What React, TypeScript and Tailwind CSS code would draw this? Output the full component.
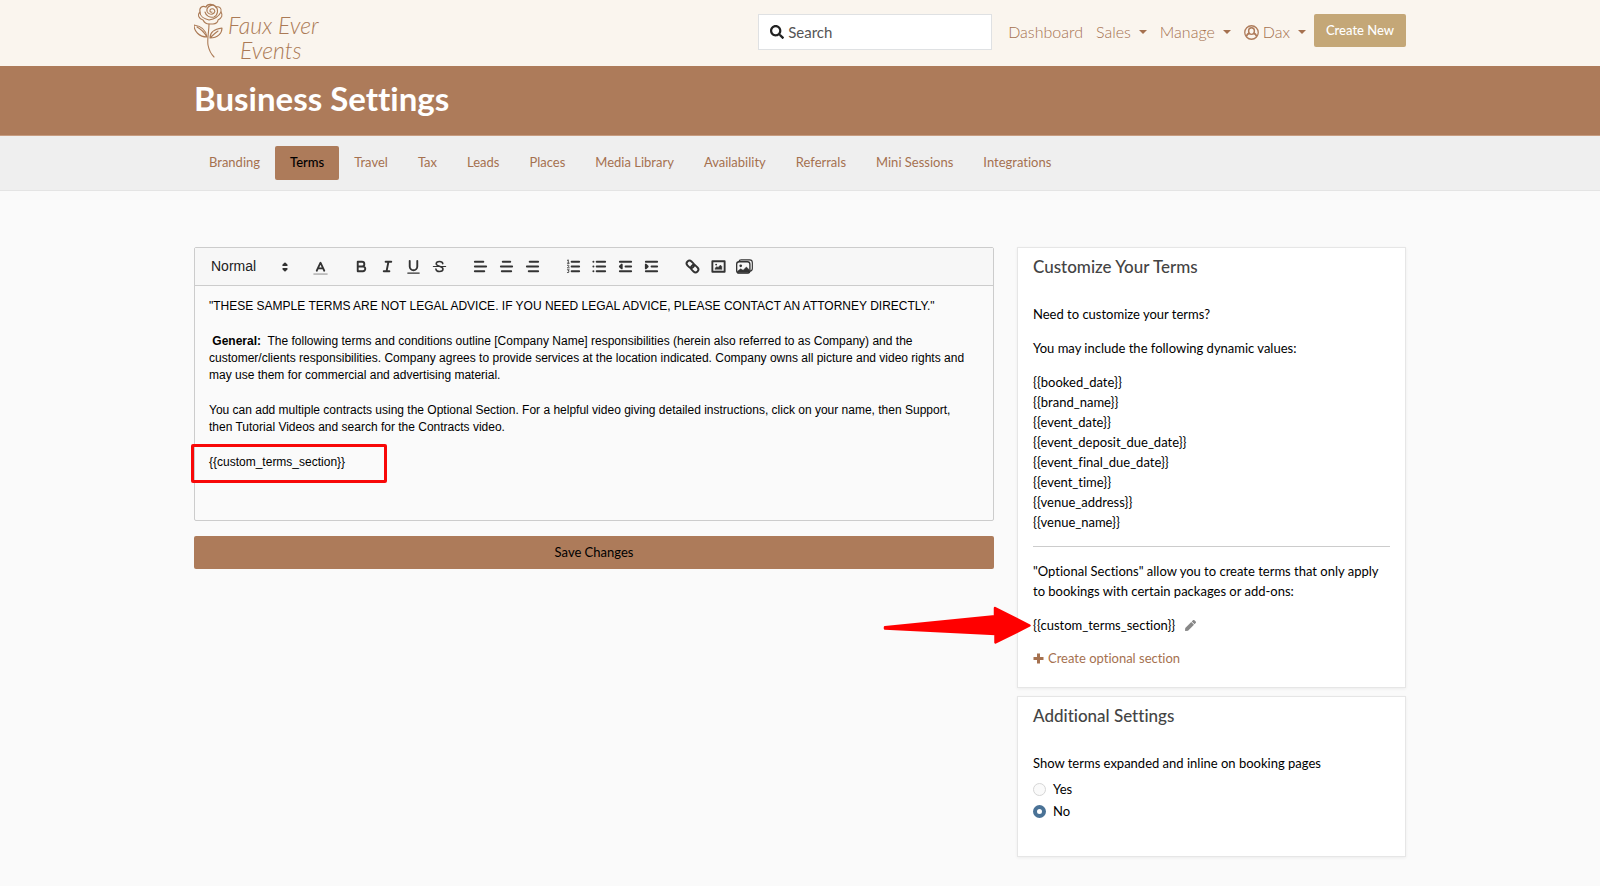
import { useState } from "react";
import type { ReactNode } from "react";
import { FaSearch, FaPen } from "react-icons/fa";

const TABS = [
  "Branding",
  "Terms",
  "Travel",
  "Tax",
  "Leads",
  "Places",
  "Media Library",
  "Availability",
  "Referrals",
  "Mini Sessions",
  "Integrations",
];

const DYNAMIC_VALUES = [
  "{{booked_date}}",
  "{{brand_name}}",
  "{{event_date}}",
  "{{event_deposit_due_date}}",
  "{{event_final_due_date}}",
  "{{event_time}}",
  "{{venue_address}}",
  "{{venue_name}}",
];

function Logo() {
  return (
    <svg viewBox="0 0 130 64" className="mt-0.5 h-16 w-[130px]" role="img" aria-label="Faux Ever Events">
      <g fill="none" stroke="#ab7a55" strokeWidth="1.100" strokeLinecap="round" strokeLinejoin="round">
        <path d="M18 10c-2 1-3-2-1-3 3-1 5 2 3 4-3 3-8 0-7-4 1-3 5-5 8-3 4 3 3 9-1 11-4 1-8-1-9-5" />
        <path d="M12 5C8 3 5 6 6 10c-3 3-1 7 3 8 1 2 3 4 6 4h4c3 0 5-2 5-4 4-2 5-5 3-8 1-4-2-6-5-5" />
        <path d="M6 10c0 4 4 7 9 8M27 10c-2 4-6 7-12 8M12 5c1-3 7-4 10 0" />
        <path d="M15 22c0 9-2 14-1 21 1 5 3 9 6 12" />
        <path d="M13 35C12 28 7 24 0 23c0 6 5 12 13 12zM13 35C10 30 7 27 3 25" />
        <path d="M16 36c0-6 4-9 12-10 0 5-4 10-12 10zM16 36c3-3 5-5 8-7" />
      </g>
      <g fill="#ab7a55" className="font-['Lato',sans-serif] text-[23px] font-light italic">
        <text x="34" y="32">Faux Ever</text>
        <text x="46" y="57">Events</text>
      </g>
    </svg>
  );
}

function Caret() {
  return <span className="ml-2 inline-block border-x-4 border-t-4 border-x-transparent border-t-[#a5714f]" />;
}

function UserIcon() {
  return (
    <svg viewBox="0 0 16 16" className="mr-1 size-[15px]" aria-hidden="true">
      <circle cx="8" cy="8" r="7.200" fill="none" stroke="#ae7b5a" strokeWidth="1.400" />
      <path d="M2.500 12.300c.6-2 1.800-3.100 3.400-3.300M13.500 12.300c-.6-2-1.800-3.100-3.400-3.300" fill="none" stroke="#ae7b5a" strokeWidth="1.800" />
      <ellipse cx="8" cy="6.500" rx="3.100" ry="3.500" fill="none" stroke="#ae7b5a" strokeWidth="1.500" />
    </svg>
  );
}

function Header() {
  return (
    <header className="bg-[#faf5ee]">
      <div className="mx-auto flex h-[66px] max-w-[1212px] items-start justify-between">
        <a href="#home">
          <Logo />
        </a>
        <div className="flex items-start pt-[14px]">
          <label className="mr-4 flex h-9 w-[234px] items-center gap-1 border border-[#dfe1e3] bg-white px-[11px]">
            <FaSearch className="size-[14px] shrink-0 text-[#222]" />
            <input
              type="text"
              aria-label="Search"
              placeholder="Search"
              className="w-full bg-transparent text-[15px] text-[#444] outline-none placeholder:text-[#555]"
            />
          </label>
          <nav className="mr-2 flex h-9 items-center gap-[13px] text-[16px] font-light text-[#a5714f]">
            <a href="#dashboard">Dashboard</a>
            <a href="#sales" className="flex items-center">
              Sales
              <Caret />
            </a>
            <a href="#manage" className="flex items-center">
              Manage
              <Caret />
            </a>
            <a href="#account" className="flex items-center">
              <UserIcon />
              Dax
              <Caret />
            </a>
          </nav>
          <button type="button" className="h-[33px] w-[92px] rounded-xs bg-[#c4a777] text-[13px] font-medium text-white">
            Create New
          </button>
        </div>
      </div>
    </header>
  );
}

function ToolButton({ label, children }: { label: string; children: ReactNode }) {
  return (
    <button type="button" aria-label={label} className="flex h-6 w-[26px] items-center justify-center">
      <svg
        viewBox="0 0 18 18"
        className="size-[17px]"
        fill="none"
        stroke="#333"
        strokeWidth="2"
        strokeLinecap="round"
        strokeLinejoin="round"
      >
        {children}
      </svg>
    </button>
  );
}

function Toolbar() {
  return (
    <div role="toolbar" aria-label="Formatting" className="flex h-[38px] items-center gap-[15px] border-b border-[#ccc] bg-[#f7f7f7] px-4">
      <div className="flex items-center gap-[11px]">
        <div className="relative w-[85px]">
          <select aria-label="Text style" className="w-full appearance-none bg-transparent text-[14px] text-[#222] outline-none">
            <option>Normal</option>
          </select>
          <svg viewBox="0 0 18 18" className="pointer-events-none absolute top-[3px] right-[3px] size-4" fill="#333" stroke="#333" strokeWidth="2" strokeLinejoin="round">
            <path d="M7 11L9 13 11 11zM7 7L9 5 11 7z" />
          </svg>
        </div>
        <ToolButton label="Text color">
          <path d="M1.500 17H16.500" stroke="#999" strokeWidth="1.200" strokeLinecap="butt" />
          <path d="M5 13.500L9 5L13 13.500M6.500 11H11.500" strokeWidth="1.900" />
        </ToolButton>
      </div>
      <div className="flex">
        <ToolButton label="Bold">
          <path d="M5 4H9.500A2.500 2.500 0 0 1 12 6.500A2.500 2.500 0 0 1 9.500 9H5zM5 9H10.500A2.500 2.500 0 0 1 13 11.500A2.500 2.500 0 0 1 10.500 14H5z" />
        </ToolButton>
        <ToolButton label="Italic">
          <path d="M7 4H13M5 14H11M8 14L10 4" />
        </ToolButton>
        <ToolButton label="Underline">
          <path d="M5 3V9a4 4 0 0 0 8 0V3" />
          <path d="M3 16H15" strokeWidth="1.400" />
        </ToolButton>
        <ToolButton label="Strikethrough">
          <path d="M2.500 9H15.500" strokeWidth="1.200" />
          <path d="M12.500 6C12.300 4.500 11 3.700 9 3.700 6.800 3.700 5.500 4.700 5.500 6.200 5.500 9.600 12.700 8 12.700 11.700 12.700 13.400 11.200 14.300 9 14.300 6.800 14.300 5.400 13.400 5.200 11.700" strokeWidth="1.600" />
        </ToolButton>
      </div>
      <div className="flex">
        <ToolButton label="Align left">
          <path d="M3 4H12M3 9H15M3 14H13" />
        </ToolButton>
        <ToolButton label="Align center">
          <path d="M5 4H13M3 9H15M4 14H14" />
        </ToolButton>
        <ToolButton label="Align right">
          <path d="M6 4H15M3 9H15M5 14H15" />
        </ToolButton>
      </div>
      <div className="flex">
        <ToolButton label="Numbered list">
          <path d="M7 4H15M7 9H15M7 14H15" />
          <path d="M2.500 2.500L3.500 2V5.500M2.500 5.500H4.500M2.500 7.700C4.500 6.800 5 8.500 2.500 10.400H4.500M2.500 12.500H4.500L3.300 13.800C5 14 4.600 16 2.500 15.400" strokeWidth="0.900" />
        </ToolButton>
        <ToolButton label="Bulleted list">
          <path d="M6 4H15M6 9H15M6 14H15M2.500 4H2.600M2.500 9H2.600M2.500 14H2.600" />
        </ToolButton>
        <ToolButton label="Decrease indent">
          <path d="M3 4H15M3 14H15M9 9H15" />
          <path d="M5 7V11L3 9z" fill="#333" />
        </ToolButton>
        <ToolButton label="Increase indent">
          <path d="M3 4H15M3 14H15M9 9H15" />
          <path d="M3 7V11L5 9z" fill="#333" />
        </ToolButton>
      </div>
      <div className="flex">
        <ToolButton label="Link">
          <g transform="rotate(45 9 9)">
            <rect x="1.500" y="6" width="8.500" height="6" rx="3" />
            <rect x="8" y="6" width="8.500" height="6" rx="3" />
          </g>
        </ToolButton>
        <ToolButton label="Image">
          <path d="M2.500 3.500H15.500V14.500H2.500z" />
          <path d="M5.500 12V10.500L7.500 9 8.500 10 11 7.500 12.500 9V12z" fill="#333" strokeWidth="0.500" />
          <circle cx="6.500" cy="7" r="1" fill="#333" stroke="none" />
        </ToolButton>
        <ToolButton label="Gallery">
          <rect x="0.700" y="4" width="14" height="12" rx="2.500" strokeWidth="1.400" />
          <path d="M3 4C3.200 2.700 4 2 5.500 2H14.500C16.500 2 17.300 3 17.300 5V11C17.300 12.800 16.500 13.600 14.700 13.900" strokeWidth="1.200" />
          <path d="M1.500 15.500V14L5 11.500 7.500 13 11 9.500 14 12.500V15.500z" fill="#333" strokeWidth="0.500" />
          <circle cx="5" cy="8.300" r="1.400" fill="#333" stroke="none" />
        </ToolButton>
      </div>
    </div>
  );
}

function Editor() {
  return (
    <div className="rounded-xs border border-[#ccc] font-['Liberation_Sans',Arial,sans-serif]">
      <Toolbar />
      <div
        role="textbox"
        aria-multiline="true"
        aria-label="Terms"
        className="flex min-h-[234px] flex-col gap-[18px] pt-3 pr-5 pl-[14px] text-[12px] leading-[17px] text-black"
      >
        <p>"THESE SAMPLE TERMS ARE NOT LEGAL ADVICE. IF YOU NEED LEGAL ADVICE, PLEASE CONTACT AN ATTORNEY DIRECTLY."</p>
        <p>
          &nbsp;<strong>General:</strong>&nbsp; The following terms and conditions outline [Company Name] responsibilities (herein also
          referred to as Company) and the customer/clients responsibilities. Company agrees to provide services at the location
          indicated. Company owns all picture and video rights and may use them for commercial and advertising material.
        </p>
        <p>
          You can add multiple contracts using the Optional Section. For a helpful video giving detailed instructions, click on
          your name, then Support, then Tutorial Videos and search for the Contracts video.
        </p>
        <p className="relative">
          {"{{custom_terms_section}}"}
          <span className="absolute -top-[10px] -left-[18px] h-[39px] w-[196px] rounded-xs border-[3px] border-[#f80808]" />
        </p>
      </div>
    </div>
  );
}

function Card({ title, children }: { title: string; children: ReactNode }) {
  return (
    <section className="border border-[#e6e6e6] bg-white px-[15px] shadow-[0_1px_3px_rgba(0,0,0,0.06)]">
      <h2 className="pt-2 pb-[25px] text-[17px] leading-[22px] font-medium text-[#444]">{title}</h2>
      {children}
    </section>
  );
}

function RadioRow({ label, checked, onSelect }: { label: string; checked: boolean; onSelect: () => void }) {
  return (
    <label className="flex h-[22px] items-center gap-[7px]">
      <input
        type="radio"
        name="inline-terms"
        checked={checked}
        onChange={onSelect}
        className="size-[13px] appearance-none rounded-full border border-[#d6d6d6] bg-[#fafafa] checked:border-4 checked:border-[#4a7296] checked:bg-white"
      />
      {label}
    </label>
  );
}

export default function App() {
  const [inline, setInline] = useState("No");
  return (
    <div className="min-h-screen bg-[#fafafa] font-['Lato',sans-serif] text-[13px] text-black [font-variant-ligatures:none]">
      <Header />
      <div className="border-b border-[#c79c80] bg-[#ad7b5a]">
        <h1 className="mx-auto h-[69px] max-w-[1212px] pt-3 text-[33px] leading-10 font-bold text-white">Business Settings</h1>
      </div>
      <div className="border-b border-[#e4e4e4] bg-[#efefef]">
        <nav className="mx-auto flex h-[54px] max-w-[1212px] items-center">
          {TABS.map((tab) => (
            <a
              key={tab}
              href={"#" + tab.toLowerCase().replace(" ", "-")}
              className={
                tab === "Terms"
                  ? "flex h-[34px] items-center rounded-xs bg-[#ad7b5a] px-[15px] font-medium text-black"
                  : "flex h-[34px] items-center px-[15px] text-[#a5714f]"
              }
            >
              {tab}
            </a>
          ))}
        </nav>
      </div>
      <main className="mx-auto grid max-w-[1212px] grid-cols-[minmax(0,1fr)_389px] items-start gap-[23px] pt-14">
        <div className="flex flex-col gap-[15px]">
          <Editor />
          <button type="button" className="h-[33px] rounded-xs bg-[#ad7b5a] text-black">
            Save Changes
          </button>
        </div>
        <aside className="flex flex-col gap-2 leading-5">
          <Card title="Customize Your Terms">
            <p className="mt-px mb-[14px]">Need to customize your terms?</p>
            <p className="mb-[14px]">You may include the following dynamic values:</p>
            <ul>
              {DYNAMIC_VALUES.map((value) => (
                <li key={value}>{value}</li>
              ))}
            </ul>
            <hr className="my-[14px] border-[#ccc]" />
            <p className="mb-[14px]">
              "Optional Sections" allow you to create terms that only apply to bookings with certain packages or add-ons:
            </p>
            <p className="relative mb-[13px] flex items-center gap-[10px]">
              <svg viewBox="0 0 148 38" className="absolute -top-[9px] -left-[150px] h-[38px] w-[148px]" aria-hidden="true">
                <path d="M2 21.300L112 10.300V2L146.500 19.500L112.500 36.500V28L2 22.500z" fill="#f00" stroke="#f00" strokeWidth="2.500" strokeLinejoin="round" />
              </svg>
              {"{{custom_terms_section}}"}
              <button type="button" aria-label="Edit section">
                <FaPen className="size-[11px] text-[#888]" />
              </button>
            </p>
            <a href="#create-section" className="mb-[19px] flex items-center gap-1 text-[#a5714f]">
              <svg viewBox="0 0 11 11" className="size-[11px]" aria-hidden="true">
                <path d="M4 0.500H7V4H10.500V7H7V10.500H4V7H0.500V4H4z" fill="currentColor" />
              </svg>
              Create optional section
            </a>
          </Card>
          <Card title="Additional Settings">
            <fieldset aria-label="Terms display" className="pt-px pb-[34px]">
              <p className="mb-[5px]">Show terms expanded and inline on booking pages</p>
              <RadioRow label="Yes" checked={inline === "Yes"} onSelect={() => setInline("Yes")} />
              <RadioRow label="No" checked={inline === "No"} onSelect={() => setInline("No")} />
            </fieldset>
          </Card>
        </aside>
      </main>
    </div>
  );
}
